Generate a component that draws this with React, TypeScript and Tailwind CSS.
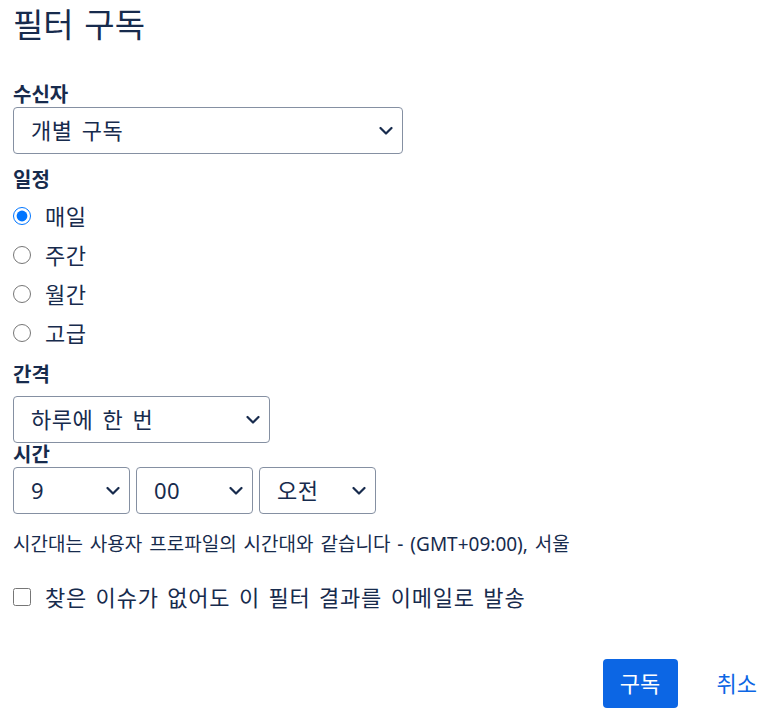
import React, { useState } from "react";

const font = { fontFamily: '"Noto Sans", "Noto Sans CJK KR", sans-serif' };

const schedules = ["매일", "주간", "월간", "고급"];

function Chevron() {
  return (
    <svg
      className="pointer-events-none absolute right-[10px] top-1/2 -translate-y-1/2"
      width="14"
      height="9"
      viewBox="0 0 14 9"
      fill="none"
    >
      <path d="M1.5 1.5L7 7L12.5 1.5" stroke="#172b4d" strokeWidth="2.2" strokeLinecap="round" strokeLinejoin="round" />
    </svg>
  );
}

function Select({ value, options, className }: { value: string; options: string[]; className: string }) {
  return (
    <div className={`relative ${className}`}>
      <select
        defaultValue={value}
        className="h-full w-full appearance-none rounded-[4px] border border-[#8590a2] bg-white pl-[17px] pr-8 text-[22px] tracking-[0.5px] [word-spacing:3px] text-[#172b4d] outline-none"
      >
        {options.map((o) => (
          <option key={o}>{o}</option>
        ))}
      </select>
      <Chevron />
    </div>
  );
}

export default function App() {
  const [schedule, setSchedule] = useState("매일");

  return (
    <div style={font} className="h-[714px] w-[778px] bg-white text-[#172b4d]">
      <div className="px-[13px]">
        <h1 className="pt-[3px] text-[33px] font-normal leading-[44px] [word-spacing:2px]">필터 구독</h1>

        {/* 수신자 */}
        <div className="mt-[36px] text-[20px] font-bold leading-[24px]">수신자</div>
        <Select value="개별 구독" options={["개별 구독", "그룹"]} className="h-[47px] w-[390px]" />

        {/* 일정 */}
        <div className="mt-[14px] text-[20px] font-bold leading-[24px]">일정</div>
        <div className="mt-[12px] flex flex-col gap-[15px]">
          {schedules.map((s) => (
            <label key={s} className="flex h-[24px] items-center gap-[14px] text-[22px] tracking-[0.5px]">
              <input
                type="radio"
                name="schedule"
                checked={schedule === s}
                onChange={() => setSchedule(s)}
                className="m-0 h-[18px] w-[18px] accent-[#0075ff]"
              />
              <span>{s}</span>
            </label>
          ))}
        </div>

        {/* 간격 */}
        <div className="mt-[18px] text-[20px] font-bold leading-[24px]">간격</div>
        <Select value="하루에 한 번" options={["하루에 한 번", "두 시간마다"]} className="mt-[9px] h-[47px] w-[257px]" />

        {/* 시간 */}
        <div className="text-[20px] font-bold leading-[24px]">시간</div>
        <div className="flex gap-[6px]">
          <Select value="9" options={["9", "10", "11", "12"]} className="h-[47px] w-[117px]" />
          <Select value="00" options={["00", "15", "30", "45"]} className="h-[47px] w-[117px]" />
          <Select value="오전" options={["오전", "오후"]} className="h-[47px] w-[117px]" />
        </div>

        <p className="mt-[18px] text-[19px] leading-[24px] [word-spacing:2px]">
          시간대는 사용자 프로파일의 시간대와 같습니다 - (GMT+09:00), 서울
        </p>

        <label className="mt-[29px] flex h-[24px] items-center gap-[14px] text-[22px]">
          <input type="checkbox" className="m-0 h-[18px] w-[18px]" />
          <span className="tracking-[0.8px] [word-spacing:2px]">찾은 이슈가 없어도 이 필터 결과를 이메일로 발송</span>
        </label>

        <div className="mt-[50px] flex items-center justify-end gap-[39px] pr-[8px]">
          <button className="h-[49px] w-[75px] rounded-[4px] bg-[#0c66e4] text-[22px] text-white">구독</button>
          <button className="text-[22px] text-[#0c66e4]">취소</button>
        </div>
      </div>
    </div>
  );
}
